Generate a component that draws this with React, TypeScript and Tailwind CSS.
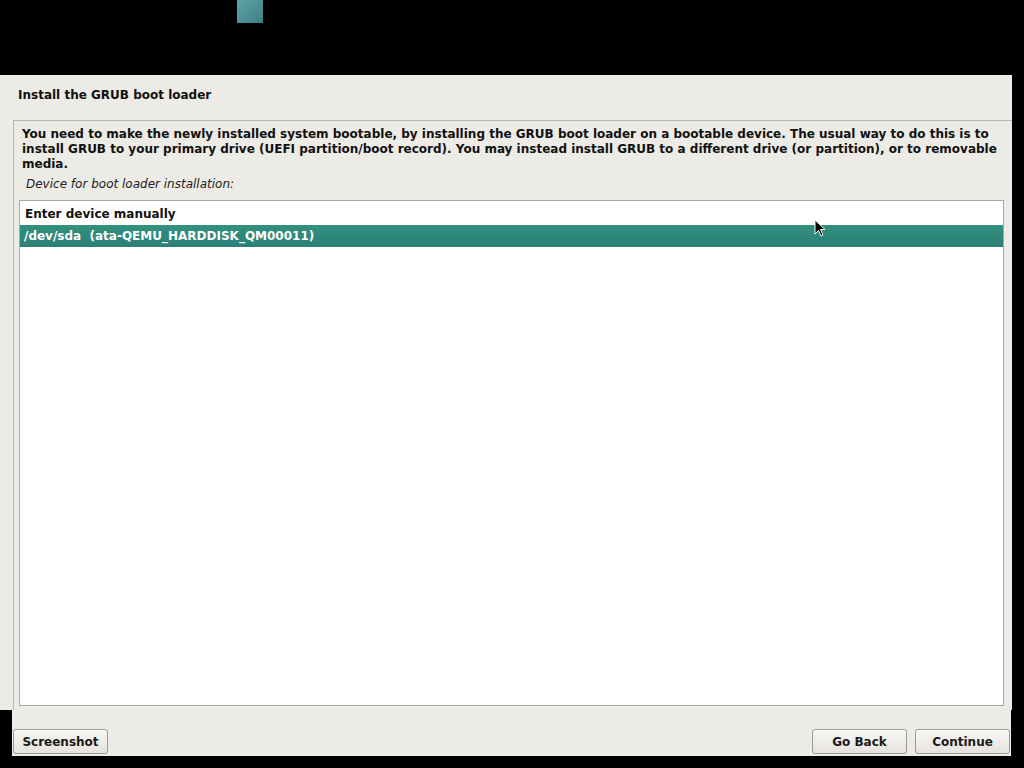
import React from 'react'

const FONT = { fontFamily: '"DejaVu Sans", "Liberation Sans", sans-serif' }

function Btn({ label, className = '' }: { label: string; className?: string }) {
  return (
    <button
      className={`h-[25px] shrink-0 rounded-[3px] border border-[#9c9a95] bg-gradient-to-b from-[#f8f7f5] to-[#e6e3de] text-[12px] font-bold text-[#1a1a1a] shadow-[inset_0_1px_0_#fff] ${className}`}
    >
      {label}
    </button>
  )
}

export default function App() {
  return (
    <div className="relative flex h-[768px] w-[1024px] flex-col overflow-hidden bg-black" style={FONT}>
      {/* top strip with the little teal tile */}
      <div className="h-[75px] shrink-0">
        <div className="ml-[237px] h-[23px] w-[26px] bg-gradient-to-br from-[#5fa3a8] to-[#3e7f86]" />
      </div>

      {/* main panel */}
      <div className="flex h-[635px] w-[1012px] shrink-0 flex-col bg-[#edebe6]">
        <div className="flex h-[45px] shrink-0 items-center pb-[6px] pl-[18px] text-[12px] font-bold text-[#111]">
          Install the GRUB boot loader
        </div>
        <div className="ml-[13px] flex flex-1 flex-col border-l border-t border-[#b9b6b0] pb-[4px]">
          <p className="pl-[8px] pr-[4px] pt-[6px] text-[12px] font-bold leading-[15px] text-[#111]">
            You need to make the newly installed system bootable, by installing the GRUB boot loader on a bootable
            device. The usual way to do this is to install GRUB to your primary drive (UEFI partition/boot record). You
            may instead install GRUB to a different drive (or partition), or to removable media.
          </p>
          <p className="pl-[12px] pt-[5px] text-[12px] italic leading-[15px] text-[#222]">
            Device for boot loader installation:
          </p>
          <div className="ml-[5px] mr-[8px] mt-[8px] flex-1 border border-[#a9a7a2] bg-white">
            <div className="flex h-[24px] items-center pl-[5px] pt-[2px] text-[12px] font-bold text-[#111]">
              Enter device manually
            </div>
            <div className="flex h-[22px] items-center bg-gradient-to-b from-[#33917f] to-[#2b7f78] pl-[4px] text-[12px] font-bold text-white">
              /dev/sda&nbsp;&nbsp;(ata-QEMU_HARDDISK_QM00011)
            </div>
          </div>
        </div>
      </div>

      {/* button bar */}
      <div className="ml-[12px] flex h-[46px] w-[999px] shrink-0 items-end bg-[#edebe6] pb-[2px]">
        <Btn label="Screenshot" className="ml-[1px] w-[95px]" />
        <Btn label="Go Back" className="ml-auto w-[95px]" />
        <Btn label="Continue" className="ml-[8px] w-[95px]" />
        <div className="w-px shrink-0" />
      </div>

      {/* mouse pointer */}
      <svg className="absolute left-[814px] top-[219px]" width="12" height="18" viewBox="0 0 12 18">
        <path d="M1 1 L1 15 L4.5 11.5 L7 17 L9 16 L6.5 10.5 L11 10.5 Z" fill="#000" stroke="#fff" strokeWidth="1" />
      </svg>
    </div>
  )
}
